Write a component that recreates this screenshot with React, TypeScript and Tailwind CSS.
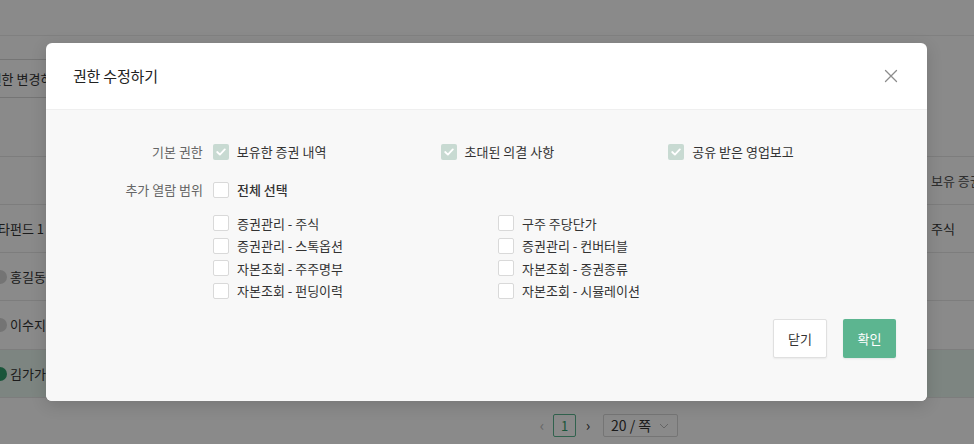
import React from "react";

function Check({ checked }: { checked?: boolean }) {
  if (checked) {
    return (
      <span className="w-[16px] h-[16px] rounded-[2px] bg-[#c8dad2] flex items-center justify-center shrink-0">
        <svg width="10" height="8" viewBox="0 0 10 8" fill="none">
          <polyline points="1.2,4 3.9,6.6 8.8,1.4" stroke="#fff" strokeWidth="1.8" strokeLinecap="round" strokeLinejoin="round" />
        </svg>
      </span>
    );
  }
  return <span className="w-[16px] h-[16px] rounded-[2px] bg-white border border-[#d9d9d9] shrink-0" />;
}

function Item({ label, checked, bold }: { label: string; checked?: boolean; bold?: boolean }) {
  return (
    <div className="flex items-center gap-[8px]">
      <Check checked={checked} />
      <span className={"text-[13px] tracking-[0px] text-[#333] whitespace-nowrap " + (bold ? "font-medium" : "")}>{label}</span>
    </div>
  );
}

export default function App() {
  const left = ["증권관리 - 주식", "증권관리 - 스톡옵션", "자본조회 - 주주명부", "자본조회 - 펀딩이력"];
  const right = ["구주 주당단가", "증권관리 - 컨버터블", "자본조회 - 증권종류", "자본조회 - 시뮬레이션"];
  return (
    <div className="relative w-[974px] h-[444px] overflow-hidden bg-white font-['Noto_Sans_CJK_KR',sans-serif] text-[#333]">
      {/* underlying page */}
      <div className="h-[36px] border-b border-[#ececec]" />
      <div className="pt-[23px]">
        <div className="-ml-[33px] w-[120px] h-[39px] border border-[#d9d9d9] rounded-[3px] flex items-center justify-center text-[13px] whitespace-nowrap">
          권한 변경하기
        </div>
      </div>
      <div className="mt-[58px]">
        <div className="flex h-[48px] border-t border-[#e8e8e8] items-center">
          <div className="flex-1" />
          <div className="w-[43px] whitespace-nowrap text-[13px] text-[#555]">보유 증권</div>
        </div>
        <div className="flex h-[48px] border-t border-[#e8e8e8] items-center">
          <div className="flex-1 -ml-[14px] text-[13px] whitespace-nowrap">기타펀드 1</div>
          <div className="w-[43px] whitespace-nowrap text-[13px]">주식</div>
        </div>
        <div className="flex h-[48px] border-t border-[#e8e8e8] items-center">
          <div className="flex-1 flex items-center gap-[3px] -ml-[7px] text-[13px] whitespace-nowrap">
            <span className="w-[14px] h-[14px] rounded-full bg-[#d6d6d6]" />홍길동
          </div>
        </div>
        <div className="flex h-[49px] border-t border-[#e8e8e8] items-center">
          <div className="flex-1 flex items-center gap-[3px] -ml-[7px] text-[13px] whitespace-nowrap">
            <span className="w-[14px] h-[14px] rounded-full bg-[#d6d6d6]" />이수지
          </div>
        </div>
        <div className="flex h-[49px] border-y border-[#e8e8e8] bg-[#e8f5ee] items-center">
          <div className="flex-1 flex items-center gap-[3px] -ml-[7px] text-[13px] whitespace-nowrap">
            <span className="w-[14px] h-[14px] rounded-full bg-[#2f9e6c]" />김가가
          </div>
        </div>
        <div className="mt-[16px] pl-[537px] flex items-center text-[13px]">
          <span className="w-[10px] text-center text-[#bbb] text-[15px]">‹</span>
          <span className="ml-[6px] w-[23px] h-[23px] border border-[#5cb590] text-[#2f9e6c] rounded-[2px] flex items-center justify-center">1</span>
          <span className="ml-[8px] w-[8px] text-center text-[#333] text-[15px]">›</span>
          <span className="ml-[11px] w-[75px] h-[23px] border border-[#d9d9d9] rounded-[2px] flex items-center pl-[7px] gap-[8px] text-[14px]">
            20 / 쪽
            <svg width="10" height="6" viewBox="0 0 10 6"><polyline points="1,1 5,5 9,1" fill="none" stroke="#bbb" strokeWidth="1" /></svg>
          </span>
        </div>
      </div>

      {/* overlay */}
      <div className="absolute inset-0 bg-black/[0.46]" />

      {/* modal */}
      <div className="absolute left-[46px] top-[43px] w-[881px] rounded-[6px] overflow-hidden bg-white shadow-[0_4px_16px_rgba(0,0,0,0.15)]">
        <div className="h-[67px] flex items-center justify-between pl-[27px] pr-[29px] border-b border-[#efefef]">
          <div className="text-[15px] tracking-[-0.2px] text-[#222]">권한 수정하기</div>
          <svg width="14" height="14" viewBox="0 0 14 14">
            <path d="M1.5 1.5 L12.5 12.5 M12.5 1.5 L1.5 12.5" stroke="#8c8c8c" strokeWidth="1.3" strokeLinecap="round" />
          </svg>
        </div>
        <div className="bg-[#f8f8f8] pt-[32px] pb-[43px] pr-[31px]">
          <div className="flex items-center h-[20px]">
            <div className="w-[167px] pr-[10px] text-right text-[13px] text-[#666]">기본 권한</div>
            <div className="w-[228px]"><Item label="보유한 증권 내역" checked /></div>
            <div className="w-[228px]"><Item label="초대된 의결 사항" checked /></div>
            <div className="w-[228px]"><Item label="공유 받은 영업보고" checked /></div>
          </div>
          <div className="flex items-center h-[20px] mt-[18px]">
            <div className="w-[167px] pr-[10px] text-right text-[13px] text-[#666]">추가 열람 범위</div>
            <Item label="전체 선택" bold />
          </div>
          <div className="ml-[167px] mt-[12px] flex">
            <div className="w-[285px] flex flex-col">
              {left.map((l) => (
                <div key={l} className="h-[22.5px] flex items-center"><Item label={l} /></div>
              ))}
            </div>
            <div className="flex flex-col">
              {right.map((l) => (
                <div key={l} className="h-[22.5px] flex items-center"><Item label={l} /></div>
              ))}
            </div>
          </div>
          <div className="mt-[17px] flex justify-end gap-[16px]">
            <button className="w-[54px] h-[39px] bg-white border border-[#e0e0e0] rounded-[2px] text-[13px] text-[#333] shadow-[0_1px_2px_rgba(0,0,0,0.06)]">닫기</button>
            <button className="w-[53px] h-[39px] bg-[#5cb590] rounded-[2px] text-[13px] text-white shadow-[0_1px_2px_rgba(0,0,0,0.08)]">확인</button>
          </div>
        </div>
      </div>
    </div>
  );
}
